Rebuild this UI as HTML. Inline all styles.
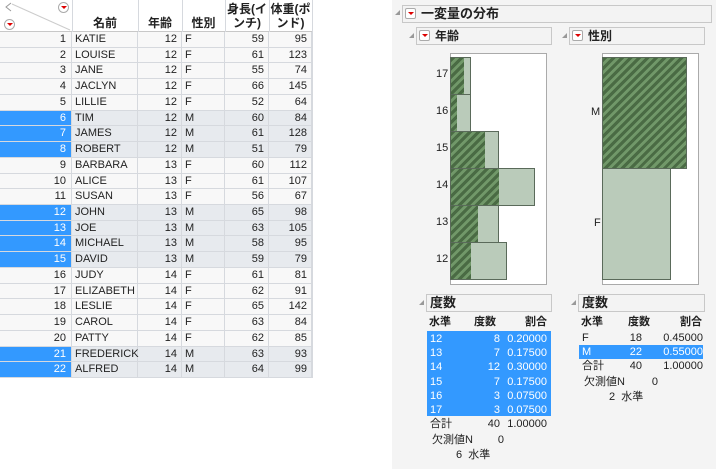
<!DOCTYPE html>
<html><head><meta charset="utf-8"><style>
*{margin:0;padding:0;box-sizing:border-box}
body{width:716px;height:469px;background:#fff;font-family:"Liberation Sans","Noto Sans CJK JP",sans-serif;font-size:11px;color:#222;position:relative;overflow:hidden}
.a{position:absolute}
.row{position:absolute;left:0;width:312px;height:15.73px;border-bottom:1px solid #d6d9de;background:#f8f8f8}
.row.s{background:#e7eaee}
.row div{position:absolute;top:0;height:100%;line-height:15px;border-right:1px solid #d6d9de}
.n{left:0;width:72px;text-align:right;padding-right:5px}
.row.s .n{background:#3399ff;color:#fff}
.nm{left:72px;width:66px;padding-left:3px}
.ag{left:138px;width:44px;text-align:right;padding-right:4px}
.sx{left:182px;width:43px;padding-left:3px}
.ht{left:225px;width:44px;text-align:right;padding-right:4px}
.wt{left:269px;width:43px;text-align:right;padding-right:4px}
.hdr{background:#f3f3f3;border:1px solid #c8c8c8;font-weight:bold;font-size:12px;padding-left:18px;line-height:16px}
.tri{position:absolute;width:0;height:0;border-left:5px solid transparent;border-bottom:5px solid #999}
.dd{position:absolute;width:11px;height:11px;border:1px solid #aaa;border-radius:2px;background:#fff}
.dd:after{content:"";position:absolute;left:2px;top:3px;border-left:3px solid transparent;border-right:3px solid transparent;border-top:3px solid #d00}
.lg{background:#bacbba;border:1px solid #5a6a5a}
.hatch{background:repeating-linear-gradient(135deg,#4a6b44 0 3px,#719869 3px 6px)}
.sel{background:#3399ff;color:#fff}
</style></head><body>
<div class="a" style="left:0;top:0;width:312px;height:32px;background:#fff;border-bottom:1px solid #c8c8c8"></div>
<div class="a" style="left:72px;top:0;width:1px;height:32px;background:#d6d9de"></div>
<div class="a" style="left:138px;top:0;width:1px;height:32px;background:#d6d9de"></div>
<div class="a" style="left:182px;top:0;width:1px;height:32px;background:#d6d9de"></div>
<div class="a" style="left:225px;top:0;width:1px;height:32px;background:#d6d9de"></div>
<div class="a" style="left:269px;top:0;width:1px;height:32px;background:#d6d9de"></div>
<div class="a" style="left:312px;top:0;width:1px;height:378px;background:#d6d9de"></div>
<svg class="a" style="left:0;top:0" width="72" height="32"><line x1="12" y1="4" x2="70" y2="30" stroke="#ccc"/><path d="M11 3 L6 7 L11 11" fill="none" stroke="#999"/></svg>
<div class="dd" style="left:58px;top:2px;border-radius:6px"></div>
<div class="dd" style="left:4px;top:19px;border-radius:6px"></div>
<div class="a" style="left:72px;top:14px;width:66px;text-align:center;font-weight:bold;font-size:12px">名前</div>
<div class="a" style="left:138px;top:14px;width:44px;text-align:center;font-weight:bold;font-size:12px">年齢</div>
<div class="a" style="left:182px;top:14px;width:43px;text-align:center;font-weight:bold;font-size:12px">性別</div>
<div class="a" style="left:225px;top:2px;width:44px;text-align:center;font-weight:bold;line-height:14px;font-size:12px;white-space:nowrap">身長(イ<br>ンチ)</div>
<div class="a" style="left:269px;top:2px;width:43px;text-align:center;font-weight:bold;line-height:14px;font-size:12px;white-space:nowrap">体重(ポ<br>ンド)</div>
<div id="rows"></div>
<div class="a" style="left:392px;top:0;width:324px;height:469px;background:#f4f4f4"></div>
<div class="tri" style="left:395px;top:10px"></div>
<div class="a hdr" style="left:402px;top:5px;width:310px;height:18px;font-size:13px">一変量の分布</div>
<div class="dd" style="left:405px;top:8px"></div>
<div class="tri" style="left:409px;top:33px"></div>
<div class="a hdr" style="left:416px;top:27px;width:136px;height:18px">年齢</div>
<div class="dd" style="left:419px;top:30px"></div>
<div class="tri" style="left:562px;top:33px"></div>
<div class="a hdr" style="left:569px;top:27px;width:136px;height:18px">性別</div>
<div class="dd" style="left:572px;top:30px"></div>
<div class="a" style="left:450px;top:53px;width:97px;height:232px;background:#fff;border:1px solid #aaa"></div>
<div class="a lg" style="left:450px;top:57px;width:21px;height:38px"></div>
<div class="a lg" style="left:450px;top:94px;width:21px;height:38px"></div>
<div class="a lg" style="left:450px;top:131px;width:49px;height:38px"></div>
<div class="a lg" style="left:450px;top:168px;width:85px;height:38px"></div>
<div class="a lg" style="left:450px;top:205px;width:49px;height:38px"></div>
<div class="a lg" style="left:450px;top:242px;width:57px;height:38px"></div>
<div class="a hatch" style="left:451px;top:58px;width:13px;height:36px"></div>
<div class="a hatch" style="left:451px;top:95px;width:6px;height:36px"></div>
<div class="a hatch" style="left:451px;top:132px;width:34px;height:36px"></div>
<div class="a hatch" style="left:451px;top:169px;width:48px;height:36px"></div>
<div class="a hatch" style="left:451px;top:206px;width:27px;height:36px"></div>
<div class="a hatch" style="left:451px;top:243px;width:20px;height:36px"></div>
<div class="a" style="left:436px;top:68px">17</div>
<div class="a" style="left:436px;top:105px">16</div>
<div class="a" style="left:436px;top:142px">15</div>
<div class="a" style="left:436px;top:179px">14</div>
<div class="a" style="left:436px;top:216px">13</div>
<div class="a" style="left:436px;top:253px">12</div>
<div class="a" style="left:602px;top:53px;width:97px;height:232px;background:#fff;border:1px solid #aaa"></div>
<div class="a lg" style="left:602px;top:168px;width:69px;height:112px"></div>
<div class="a" style="left:602px;top:57px;width:85px;height:112px;border:1px solid #5a6a5a;background:#5a6a5a"><div class="hatch" style="width:100%;height:100%"></div></div>
<div class="a" style="left:591px;top:106px">M</div>
<div class="a" style="left:594px;top:217px">F</div>
<div class="tri" style="left:419px;top:300px"></div>
<div class="a hdr" style="left:426px;top:294px;width:126px;height:18px;padding-left:3px;font-size:13px">度数</div>
<div class="tri" style="left:571px;top:300px"></div>
<div class="a hdr" style="left:578px;top:294px;width:127px;height:18px;padding-left:3px;font-size:13px">度数</div>
<div class="a sel" style="left:427px;top:331px;width:124px;height:85px"></div>
<div class="a sel" style="left:579px;top:345px;width:124px;height:14px"></div>
<div id="ft"></div>
<script>
var d=[["1","KATIE",12,"F",59,95],["2","LOUISE",12,"F",61,123],["3","JANE",12,"F",55,74],["4","JACLYN",12,"F",66,145],["5","LILLIE",12,"F",52,64],["6","TIM",12,"M",60,84],["7","JAMES",12,"M",61,128],["8","ROBERT",12,"M",51,79],["9","BARBARA",13,"F",60,112],["10","ALICE",13,"F",61,107],["11","SUSAN",13,"F",56,67],["12","JOHN",13,"M",65,98],["13","JOE",13,"M",63,105],["14","MICHAEL",13,"M",58,95],["15","DAVID",13,"M",59,79],["16","JUDY",14,"F",61,81],["17","ELIZABETH",14,"F",62,91],["18","LESLIE",14,"F",65,142],["19","CAROL",14,"F",63,84],["20","PATTY",14,"F",62,85],["21","FREDERICK",14,"M",63,93],["22","ALFRED",14,"M",64,99]];
var h="";d.forEach(function(r,i){h+='<div class="row'+(r[3]=="M"?" s":"")+'" style="top:'+(32+i*15.73)+'px"><div class="n">'+r[0]+'</div><div class="nm">'+r[1]+'</div><div class="ag">'+r[2]+'</div><div class="sx">'+r[3]+'</div><div class="ht">'+r[4]+'</div><div class="wt">'+r[5]+'</div></div>';});
document.getElementById("rows").innerHTML=h;
function L(x,y,t,w,al,c){return '<div class="a" style="left:'+x+'px;top:'+y+'px;width:'+w+'px;text-align:'+al+';line-height:14px;white-space:nowrap;'+(c||'')+'">'+t+'</div>';}
var f="";
f+=L(429,315,"水準",30,"left","font-weight:bold")+L(474,315,"度数",30,"left","font-weight:bold")+L(515,315,"割合",32,"right","font-weight:bold");
var ag=[["12",8,"0.20000"],["13",7,"0.17500"],["14",12,"0.30000"],["15",7,"0.17500"],["16",3,"0.07500"],["17",3,"0.07500"]];
ag.forEach(function(r,i){var y=332+i*14.2;f+=L(430,y,r[0],30,"left","color:#fff")+L(470,y,r[1],30,"right","color:#fff")+L(505,y,r[2],42,"right","color:#fff");});
f+=L(430,417,"合計",30,"left")+L(470,417,"40",30,"right")+L(505,417,"1.00000",42,"right");
f+=L(432,433,"欠測値N",50,"left")+L(490,433,"0",14,"right");
f+=L(456,448,"6&nbsp;&nbsp;水準",60,"left");
f+=L(581,315,"水準",30,"left","font-weight:bold")+L(628,315,"度数",30,"left","font-weight:bold")+L(670,315,"割合",32,"right","font-weight:bold");
f+=L(582,331,"F",20,"left")+L(620,331,"18",22,"right")+L(660,331,"0.45000",43,"right");
f+=L(582,345,"M",20,"left","color:#fff")+L(620,345,"22",22,"right","color:#fff")+L(660,345,"0.55000",43,"right","color:#fff");
f+=L(582,359,"合計",30,"left")+L(620,359,"40",22,"right")+L(660,359,"1.00000",43,"right");
f+=L(584,375,"欠測値N",50,"left")+L(644,375,"0",14,"right");
f+=L(609,390,"2&nbsp;&nbsp;水準",60,"left");
document.getElementById("ft").innerHTML=f;
</script>
</body></html>
